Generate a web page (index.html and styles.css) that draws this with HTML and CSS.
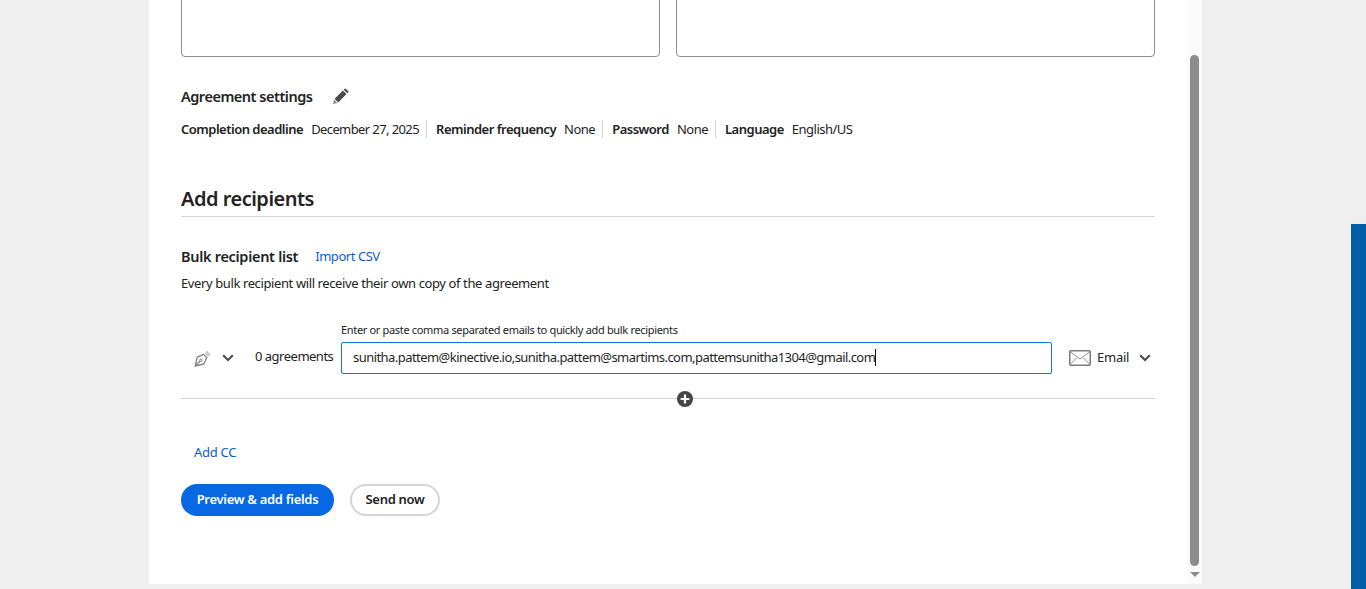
FILE: index.html
```html
<!DOCTYPE html>
<html lang="en">
<head>
<meta charset="utf-8">
<title>Bulk recipient list</title>
<link rel="stylesheet" href="styles.css">
</head>
<body>
<div class="shell">
  <main class="panel">
    <div class="content">
      <div class="boxes">
        <div class="box"></div>
        <div class="box"></div>
      </div>
      <div class="settings-head">
        <h3 class="settings-title">Agreement settings</h3>
        <svg class="pencil" viewBox="0 0 18 18" width="18" height="18"><path fill="#4b4b4b" d="M13.2 1.2 16.8 4.8 15.3 6.3 11.7 2.7ZM10.9 3.5 14.5 7.1 6.2 15.4 2.6 11.8Z"/><path fill="#8a8a8a" d="M2.1 12.6 5.4 15.9 1 17Z"/></svg>
      </div>
      <div class="meta">
        <div class="meta-item"><b>Completion deadline</b><span class="date">December 27, 2025</span></div>
        <div class="meta-item"><b>Reminder frequency</b><span>None</span></div>
        <div class="meta-item"><b>Password</b><span>None</span></div>
        <div class="meta-item last"><b>Language</b><span>English/US</span></div>
      </div>
      <h2 class="section-title">Add recipients</h2>
      <div class="bulk-head">
        <h3 class="bulk-title">Bulk recipient list</h3>
        <a class="link" href="#">Import CSV</a>
      </div>
      <p class="bulk-desc">Every bulk recipient will receive their own copy of the agreement</p>
      <div class="hint">Enter or paste comma separated emails to quickly add bulk recipients</div>
      <div class="recipient">
        <div class="role">
          <svg class="pen" viewBox="0 0 18 18" width="18" height="18"><path fill="none" stroke="#858585" stroke-width="1.3" stroke-linejoin="round" d="M1.2 17 3.2 8.2 9.6 5.4 12.8 8.6 9.8 15ZM1.2 17 6 12.2"/><circle cx="6.9" cy="11.3" r="1.2" fill="none" stroke="#858585"/><path fill="#cfcfcf" d="M10.4 4.6 13.2 1.6 16.8 5.2 13.8 8Z"/></svg>
          <svg class="chev" viewBox="0 0 12 8" width="12" height="8"><path fill="none" stroke="#4b4b4b" stroke-width="2" d="M1.2 1.2 6 6 10.8 1.2"/></svg>
        </div>
        <span class="count">0 agreements</span>
        <div class="input">sunitha.pattem@kinective.io,sunitha.pattem@smartims.com,pattemsunitha1304@gmail.com<i class="caret"></i></div>
        <div class="delivery">
          <svg class="mail" viewBox="0 0 22 16" width="22" height="16"><rect x=".75" y=".75" width="20.5" height="14.5" rx="1" fill="none" stroke="#7a7a7a" stroke-width="1.5"/><path fill="none" stroke="#8e8e8e" d="M1 1.5 11 9 21 1.5M1 14.5 8 7.5M21 14.5 14 7.5"/></svg>
          <span class="mail-label">Email</span>
          <svg class="chev" viewBox="0 0 12 8" width="12" height="8"><path fill="none" stroke="#4b4b4b" stroke-width="2" d="M1.2 1.2 6 6 10.8 1.2"/></svg>
        </div>
      </div>
      <div class="divider">
        <svg class="plus" viewBox="0 0 16 16" width="16" height="16"><circle cx="8" cy="8" r="8" fill="#464646"/><path stroke="#fff" stroke-width="2.2" d="M8 3.6V12.4M3.6 8H12.4"/></svg>
      </div>
      <a class="link cc" href="#">Add CC</a>
      <div class="actions">
        <button class="btn primary" type="button">Preview &amp; add fields</button>
        <button class="btn secondary" type="button">Send now</button>
      </div>
    </div>
  </main>
  <div class="scrollbar">
    <div class="thumb"></div>
    <div class="arrow"></div>
  </div>
</div>
<div class="edge"></div>
</body>
</html>
```
FILE: styles.css
```css
* { box-sizing: border-box; }
html, body { height: 100%; margin: 0; }
body {
  background: #efefef;
  overflow: hidden;
  font-family: "Noto Sans", "Open Sans", sans-serif;
  color: #222;
  font-size: 13px;
}
.shell { display: flex; height: 584px; padding-left: 149px; }
.panel { width: 1038px; height: 584px; background: #fff; overflow: hidden; }
.content { padding: 0 32px; display: flex; flex-direction: column; }
.boxes { display: flex; gap: 16px; margin-top: -43px; }
.box { flex: 1; height: 100px; border: 1px solid #8e8e8e; border-radius: 4px; }
.settings-head { display: flex; align-items: center; gap: 20px; height: 20px; margin-top: 29px; }
.settings-title { margin: 0; font-size: 14.5px; font-weight: 600; letter-spacing: -.48px; color: #222; }
.pencil { display: block; }
.meta { display: flex; margin-top: 14px; height: 18px; align-items: center; }
.meta-item { display: flex; gap: 8px; height: 18px; align-items: center; padding-right: 7px; margin-right: 9px; border-right: 1px solid #d5d5d5; letter-spacing: -.5px; }
.meta-item.last { border-right: 0; }
.meta-item b { font-weight: 600; color: #222; letter-spacing: -.5px; }
.date { letter-spacing: -.6px; }
.section-title { margin: 46px 0 0; height: 33px; border-bottom: 1px solid #d5d5d5; font-size: 20px; line-height: 30px; font-weight: 600; letter-spacing: -.5px; color: #222; }
.bulk-head { display: flex; align-items: center; gap: 17px; margin-top: 29px; height: 20px; }
.bulk-title { margin: 0; font-size: 14.5px; font-weight: 600; letter-spacing: -.3px; }
.link { color: #0b5fc5; text-decoration: none; letter-spacing: -.45px; }
.bulk-desc { margin: 8px 0 0; height: 18px; line-height: 18px; letter-spacing: -.39px; }
.hint { margin: 30px 0 0 160px; font-size: 11px; line-height: 16px; height: 16px; letter-spacing: -.33px; }
.recipient { display: flex; align-items: center; height: 32px; margin-top: 4px; }
.role { display: flex; align-items: center; gap: 10px; width: 74px; padding-left: 13px; }
.count { width: 86px; letter-spacing: -.5px; padding-bottom: 4px; }
.input { width: 711px; height: 32px; border: 1px solid #1473e6; border-radius: 2px; padding: 0 11px; line-height: 29px; letter-spacing: -.55px; white-space: nowrap; color: #1f1f1f; }
.caret { display: inline-block; width: 1px; height: 17px; background: #111; vertical-align: -4px; }
.delivery { display: flex; align-items: center; margin-left: 17px; }
.mail-label { margin: 0 10px 0 6px; letter-spacing: -.25px; padding-bottom: 2px; }
.divider { display: flex; justify-content: center; align-items: center; height: 1px; margin-top: 24px; background: #d5d5d5; padding-left: 34px; }
.plus { flex: none; }
.cc { margin: 44px 0 0 13px; line-height: 18px; height: 18px; letter-spacing: -.3px; }
.actions { display: flex; gap: 16px; margin-top: 23px; }
.btn { height: 32px; border-radius: 16px; font: 600 13px "Noto Sans", sans-serif; letter-spacing: -.3px; padding: 0 0 2px; }
.primary { width: 153px; background: #0868e3; border: 0; color: #fff; }
.secondary { width: 90px; background: #fff; border: 2px solid #d5d5d5; color: #222; }
.scrollbar { width: 15px; height: 584px; background: #fbfbfb; display: flex; flex-direction: column; align-items: center; padding-top: 55px; }
.thumb { width: 9px; height: 511px; background: #8c8c8c; border-radius: 5px; }
.arrow { margin-top: 6px; border-left: 5px solid transparent; border-right: 5px solid transparent; border-top: 5px solid #8c8c8c; }
.edge { position: absolute; left: 1351px; top: 224px; width: 15px; height: 365px; background: #005da6; }
```
